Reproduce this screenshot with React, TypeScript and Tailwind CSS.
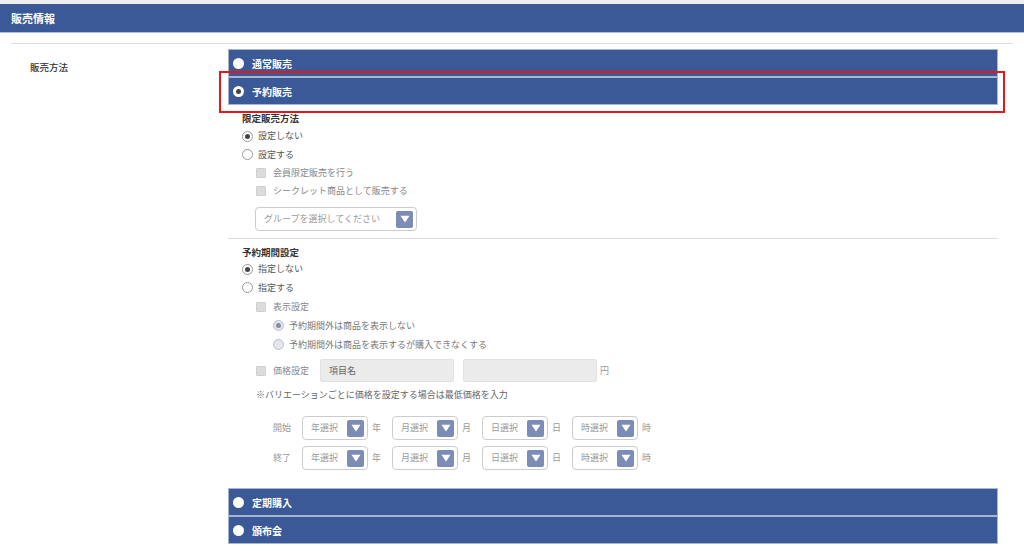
import React from "react";

const FONT = { fontFamily: '"Noto Sans CJK JP", "Noto Sans", sans-serif' };

function BarRadio({ checked }: { checked?: boolean }) {
  return (
    <span className="w-[11px] h-[11px] rounded-full bg-white flex items-center justify-center shrink-0">
      {checked && <span className="w-[5px] h-[5px] rounded-full bg-[#444]" />}
    </span>
  );
}

function Bar({ label, checked }: { label: string; checked?: boolean }) {
  return (
    <div className="h-[28px] bg-[#3b5897] border border-[#a7b5d4] flex items-center pl-[4px] gap-[8px] text-white font-bold text-[10px]">
      <BarRadio checked={checked} />
      <span>{label}</span>
    </div>
  );
}

function Radio({ checked, soft }: { checked?: boolean; soft?: boolean }) {
  if (soft) {
    return (
      <span className="w-[11px] h-[11px] rounded-full border border-[#b9bfd0] bg-[#e3e6ef] flex items-center justify-center shrink-0">
        {checked && <span className="w-[5px] h-[5px] rounded-full bg-[#8a8f9c]" />}
      </span>
    );
  }
  return (
    <span className="w-[11px] h-[11px] rounded-full border border-[#9a9a9a] bg-white flex items-center justify-center shrink-0">
      {checked && <span className="w-[5px] h-[5px] rounded-full bg-[#444]" />}
    </span>
  );
}

function Check() {
  return <span className="w-[10px] h-[10px] rounded-[1px] border border-[#cfcfcf] bg-[#dcdcdc] shrink-0" />;
}

function Chevron() {
  return (
    <span className="w-[17px] h-[17px] rounded-[2px] bg-[#7b8db7] flex items-center justify-center shrink-0">
      <svg width="10" height="8" viewBox="0 0 10 8">
        <path d="M0.5 0.8 L9.5 0.8 L5 7.4 Z" fill="#ffffff" />
      </svg>
    </span>
  );
}

function Select({ label, w }: { label: string; w: string }) {
  return (
    <div
      className={`${w} h-[24px] border border-[#cccccc] rounded-[4px] bg-white flex items-center justify-between pl-[8px] pr-[3px] text-[9px] text-[#9a9a9a]`}
    >
      <span>{label}</span>
      <Chevron />
    </div>
  );
}

function DateRow({ label }: { label: string }) {
  const items: [string, string][] = [
    ["年選択", "年"],
    ["月選択", "月"],
    ["日選択", "日"],
    ["時選択", "時"],
  ];
  return (
    <div className="flex items-center h-[24px] pl-[31px] text-[9px] text-[#999]">
      <span className="w-[29px]">{label}</span>
      {items.map(([s, u]) => (
        <div key={s} className="flex items-center">
          <Select label={s} w="w-[66px]" />
          <span className="ml-[4px] w-[20px]">{u}</span>
        </div>
      ))}
    </div>
  );
}

export default function App() {
  return (
    <div className="w-[1024px] h-[551px] bg-white overflow-hidden" style={FONT}>
      <div className="h-[4px] bg-[#eeeeee]" />
      <div className="h-[29px] bg-[#3b5897] border-b border-[#b3bdd6] flex items-center pl-[11px] text-white font-bold text-[11px]">
        販売情報
      </div>
      <div className="px-[11px] pt-[10px]">
        <div className="border-t border-[#dddddd]" />
        <div className="flex pt-[5px]">
          <div className="w-[217px] pl-[19px] pt-[11px] text-[9.5px] font-medium text-[#333]">販売方法</div>
          <div className="w-[770px] flex flex-col">
            <div className="relative">
              <Bar label="通常販売" />
              <Bar label="予約販売" checked />
              <div className="absolute left-[-9px] top-[22px] w-[786px] h-[42px] border-2 border-[#e3161b]" />
            </div>
            <div className="pl-[14px] text-[9px] text-[#555]">
              <div className="h-[17px] mt-[5px] flex items-center font-bold text-[9.5px] text-[#333]">限定販売方法</div>
              <div className="h-[18px] flex items-center gap-[5px]">
                <Radio checked />
                <span>設定しない</span>
              </div>
              <div className="h-[19px] flex items-center gap-[5px]">
                <Radio />
                <span>設定する</span>
              </div>
              <div className="h-[18px] flex items-center gap-[7px] pl-[14px] text-[#888]">
                <Check />
                <span>会員限定販売を行う</span>
              </div>
              <div className="h-[18px] flex items-center gap-[7px] pl-[14px] text-[#888]">
                <Check />
                <span>シークレット商品として販売する</span>
              </div>
              <div className="mt-[7px] pl-[13px]">
                <Select label="グループを選択してください" w="w-[162px]" />
              </div>
            </div>
            <div className="mt-[7px] border-t border-[#dddddd]" />
            <div className="pl-[14px] text-[9px] text-[#555]">
              <div className="h-[16px] mt-[5px] flex items-center font-bold text-[9.5px] text-[#333]">予約期間設定</div>
              <div className="h-[18px] flex items-center gap-[5px]">
                <Radio checked />
                <span>指定しない</span>
              </div>
              <div className="h-[19px] flex items-center gap-[5px]">
                <Radio />
                <span>指定する</span>
              </div>
              <div className="h-[19px] flex items-center gap-[7px] pl-[14px] text-[#888]">
                <Check />
                <span>表示設定</span>
              </div>
              <div className="h-[19px] flex items-center gap-[5px] pl-[31px] text-[#777]">
                <Radio soft checked />
                <span>予約期間外は商品を表示しない</span>
              </div>
              <div className="h-[19px] flex items-center gap-[5px] pl-[31px] text-[#777]">
                <Radio soft />
                <span>予約期間外は商品を表示するが購入できなくする</span>
              </div>
              <div className="mt-[5px] h-[23px] flex items-center pl-[14px] text-[#888]">
                <Check />
                <span className="ml-[7px] w-[47px]">価格設定</span>
                <div className="w-[134px] h-[23px] bg-[#ebebeb] border border-[#e2e2e2] rounded-[2px] flex items-center pl-[8px] text-[#666]">
                  項目名
                </div>
                <div className="ml-[9px] w-[134px] h-[23px] bg-[#ebebeb] border border-[#e2e2e2] rounded-[2px]" />
                <span className="ml-[3px] text-[#999]">円</span>
              </div>
              <div className="mt-[3px] h-[20px] flex items-center pl-[14px] text-[#666]">
                ※バリエーションごとに価格を設定する場合は最低価格を入力
              </div>
              <div className="mt-[11px] flex flex-col gap-[6px]">
                <DateRow label="開始" />
                <DateRow label="終了" />
              </div>
            </div>
            <div className="mt-[18px]">
              <Bar label="定期購入" />
              <Bar label="頒布会" />
            </div>
          </div>
        </div>
      </div>
    </div>
  );
}
